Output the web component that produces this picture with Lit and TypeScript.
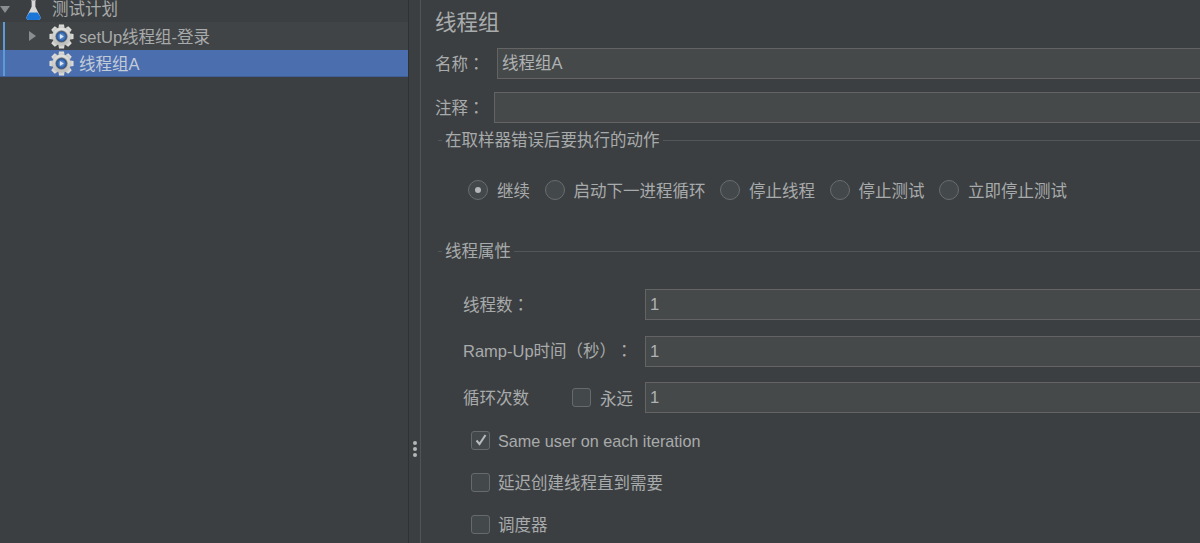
import { LitElement, html, css, svg } from "lit";
import { customElement } from "lit/decorators.js";

const teeth = [0, 45, 90, 135, 180, 225, 270, 315];

const gear = () => html`<svg class="gear" viewBox="0 0 25 25" width="25" height="25">
  <defs>
    <radialGradient id="b" cx="50%" cy="50%" r="55%"><stop offset="0" stop-color="#7ba8dc"/><stop offset=".7" stop-color="#2f62aa"/><stop offset="1" stop-color="#2a4a7c"/></radialGradient>
    <linearGradient id="s" x1="0" y1="0" x2="0" y2="1"><stop offset="0" stop-color="#e2e2e0"/><stop offset="1" stop-color="#bdbdba"/></linearGradient>
  </defs>
  ${teeth.map((a) => svg`<path fill="url(#s)" d="M10 .5h5l.8 4.500h-6.600z" transform="rotate(${a} 12.500 12.500)"/>`)}
  <circle cx="12.500" cy="12.500" r="9" fill="url(#s)"/>
  <circle cx="12.500" cy="12.500" r="6.300" fill="#9a9b9b"/>
  <circle cx="12.500" cy="12.500" r="5.300" fill="url(#b)" stroke="#3b4c68" stroke-width=".6"/>
  <path fill="#dfe7f2" d="M10.900 10l3.900 2.500-3.900 2.500z"/>
</svg>`;

const flask = () => html`<svg viewBox="0 0 16 22" width="15" height="21">
  <path fill="#d6d8d9" d="M5.500 0h5v.8l-.5.4V7l5.200 10.500c.9 2-.3 3.700-2.200 3.700H3c-1.900 0-3.100-1.700-2.200-3.700L6 7V1.200L5.500.8z"/>
  <path fill="#1c76d8" d="M3.800 13h8.400l3 4.500c.9 2-.3 3.700-2.200 3.700H3c-1.900 0-3.100-1.700-2.200-3.700z"/>
</svg>`;

@customElement("app-root")
export class AppRoot extends LitElement {
  static styles = css`
    :host { display: block; width: 1200px; height: 543px; overflow: hidden; background: #3c3f41;
      font-family: "Liberation Sans", "Noto Sans CJK SC", sans-serif; color: #a8abac; font-size: 16.500px; }
    .app { display: flex; height: 543px; }
    .tree { width: 408px; flex: none; box-sizing: border-box; display: flex; flex-direction: column; overflow: hidden; }
    .row { display: flex; align-items: center; flex: none; }
    .top { height: 22px; }
    .top .label { padding-bottom: 6px; }
    .sub { position: relative; box-sizing: border-box; }
    .sub::before { content: ""; position: absolute; left: 3px; top: 0; bottom: 0; width: 1.500px; background: #5d9bd6; }
    .hover { height: 28px; background: #414446; }
    .sel { height: 27px; background: #4b6eaf; color: #c3cbd8; border-bottom: 1px solid #3f5f99; }
    .sel .gear { margin-top: 1px; }
    .arrow { width: 0; height: 0; flex: none; }
    .down { border-left: 5px solid transparent; border-right: 5px solid transparent; border-top: 7px solid #8b8e90; margin: 0 16px 4px 0; }
    .right { border-top: 5px solid transparent; border-bottom: 5px solid transparent; border-left: 7px solid #8b8e90; margin-left: 29px; }
    .flask { display: flex; margin-right: 11px; align-self: flex-start; }
    .gear { flex: none; margin-right: 5px; display: block; }
    .g1 { margin-left: 13px; }
    .g2 { margin-left: 49px; }
    .divider { width: 13px; flex: none; box-sizing: border-box; border-left: 1px solid #2f3133; border-right: 1px solid #515456;
      display: flex; flex-direction: column; align-items: center; justify-content: center; gap: 2px; padding-top: 355px; }
    .divider i { width: 4px; height: 4px; border-radius: 50%; background: #b4b6b7; }
    .main { flex: 1; padding: 8px 0 0 14px; min-width: 0; }
    .title { font-size: 21.500px; line-height: 30px; color: #a9acad; margin-bottom: 10px; }
    .field { display: flex; align-items: center; height: 31px; }
    .field label { flex: none; padding-bottom: 2px; }
    .p { font-family: "Liberation Sans", "Noto Sans CJK TC", sans-serif; }
    .k { font-family: "Liberation Sans", "Noto Sans CJK KR", sans-serif; text-spacing-trim: space-all; }
    .input { flex: 1; box-sizing: border-box; height: 31px; background: #45494a; border: 1px solid #646464; border-right: none;
      line-height: 29px; padding-left: 4px; color: #b0b3b4; }
    .name label { width: 62px; }
    .note { margin-top: 13px; }
    .note label { width: 59px; }
    .legend { display: flex; align-items: center; gap: 3px; line-height: 20px; margin-left: 3px; }
    .legend::before { content: ""; width: 4px; height: 1px; background: #535658; }
    .legend::after { content: ""; flex: 1; height: 1px; background: #535658; }
    .l1 { margin-top: 7px; }
    .radios { display: flex; align-items: center; margin: 29px 0 0 33px; height: 22px; }
    .radio { width: 20px; height: 20px; box-sizing: border-box; border-radius: 50%; border: 1px solid #6a6d6e; background: #43484a;
      display: flex; align-items: center; justify-content: center; margin-right: 9px; flex: none; }
    .radio i { width: 6px; height: 6px; border-radius: 50%; background: #b4b6b7; }
    .radios span { margin-right: 14.500px; }
    .l2 { margin-top: 40px; }
    .props { margin: 28px 0 0 28px; display: flex; flex-direction: column; gap: 15.500px; }
    .prop { display: flex; align-items: center; height: 31px; }
    .prop label { width: 182px; flex: none; white-space: nowrap; padding-bottom: 2px; }
    .prop .loop { width: 109px; }
    .box { width: 19px; height: 19px; box-sizing: border-box; border: 1px solid #666a6b; border-radius: 3px; background: #43484a; flex: none;
      display: flex; align-items: center; justify-content: center; }
    .forever { width: 73px; flex: none; display: flex; align-items: center; gap: 9px; }
    .checks { margin: 17.500px 0 0 36px; display: flex; flex-direction: column; gap: 23px; }
    .check { display: flex; align-items: center; gap: 8px; height: 19px; }
    .latin { font-size: 16.200px; padding-top: 2px; }
  `;

  render() {
    const radios = ["继续", "启动下一进程循环", "停止线程", "停止测试", "立即停止测试"];
    return html`<div class="app">
      <div class="tree">
        <div class="row top"><span class="arrow down"></span><span class="flask">${flask()}</span><span class="label">测试计划</span></div>
        <div class="row sub hover"><span class="arrow right"></span><span class="g1">${gear()}</span>setUp线程组-登录</div>
        <div class="row sub sel"><span class="g2">${gear()}</span>线程组A</div>
      </div>
      <div class="divider"><i></i><i></i><i></i></div>
      <div class="main">
        <div class="title">线程组</div>
        <div class="field name"><label>名称<span class="p">：</span></label><div class="input">线程组A</div></div>
        <div class="field note"><label>注释<span class="p">：</span></label><div class="input"></div></div>
        <div class="legend l1">在取样器错误后要执行的动作</div>
        <div class="radios">
          ${radios.map((r, i) => html`<div class="radio">${i === 0 ? html`<i></i>` : ""}</div><span>${r}</span>`)}
        </div>
        <div class="legend l2">线程属性</div>
        <div class="props">
          <div class="prop"><label>线程数<span class="p">：</span></label><div class="input">1</div></div>
          <div class="prop"><label>Ramp-Up时间<span class="k">（</span>秒<span class="k">）</span><span class="p">：</span></label><div class="input">1</div></div>
          <div class="prop"><label class="loop">循环次数</label>
            <div class="forever"><div class="box"></div>永远</div>
            <div class="input">1</div></div>
        </div>
        <div class="checks">
          <div class="check"><div class="box"><svg viewBox="0 0 14 14" width="14" height="14"><path fill="none" stroke="#b8babb" stroke-width="2" d="M2.500 7.500l3 3.500 6-9"/></svg></div><span class="latin">Same user on each iteration</span></div>
          <div class="check"><div class="box"></div>延迟创建线程直到需要</div>
          <div class="check"><div class="box"></div>调度器</div>
        </div>
      </div>
    </div>`;
  }
}
